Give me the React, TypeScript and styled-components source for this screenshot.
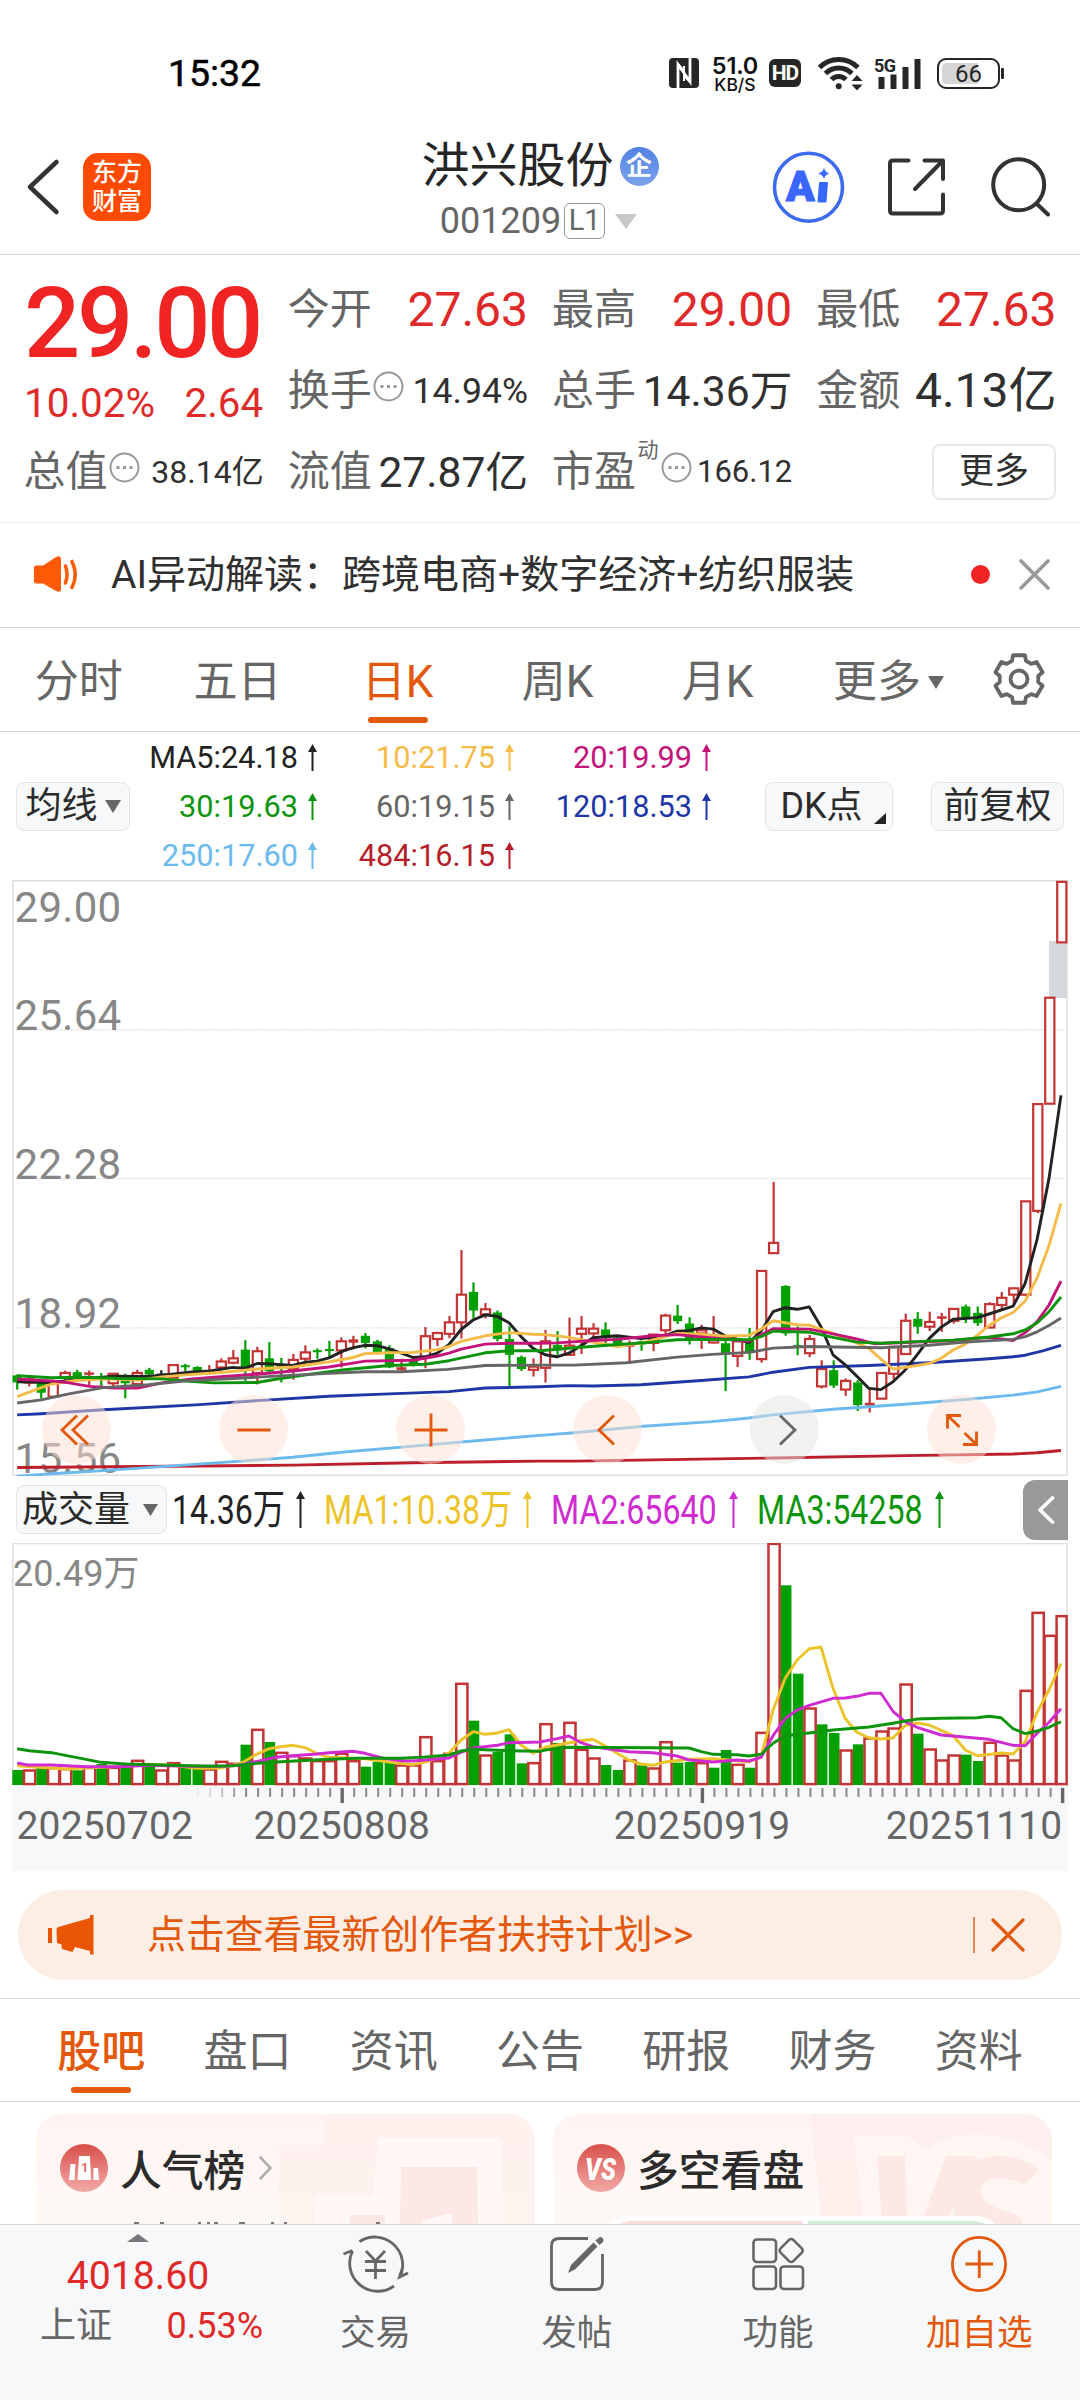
import React from "react";
import styled, { createGlobalStyle } from "styled-components";

const RED = "#e02a2a";
const ORANGE = "#e4580c";
const GREY = "#666666";
const DARK = "#2b2b2b";

const Global = createGlobalStyle`
  * { box-sizing: border-box; }
  body {
    margin: 0;
    background: #fff;
    font-family: Roboto, "Noto Sans CJK SC", sans-serif;
    color: ${DARK};
  }
  svg { display: block; flex: none; }
`;

const Page = styled.main`
  width: 1080px;
  height: 2400px;
  overflow: hidden;
  display: flex;
  flex-direction: column;
  background: #fff;
`;

/* ---------- status bar ---------- */

const StatusBar = styled.header`
  height: 120px;
  flex: none;
  padding: 26px 75px 0 168px;
  display: flex;
  align-items: center;
  justify-content: space-between;
`;
const Clock = styled.span`
  font-size: 37.4px;
  font-weight: 400;
  line-height: 40px;
  color: #000;
  -webkit-text-stroke: 0.5px #000;
`;
const StatusIcons = styled.div`
  display: flex;
  align-items: center;
  height: 40px;
`;
const NetSpeed = styled.div`
  width: 48px;
  margin: 0 10px 0 12px;
  padding-top: 3px;
  display: flex;
  flex-direction: column;
  align-items: center;
  font-family: Inter, Roboto, sans-serif;
  font-weight: 600;
  color: #111;
`;
const SpeedValue = styled.span`
  font-size: 23.5px;
  line-height: 19px;
  letter-spacing: -0.2px;
`;
const SpeedUnit = styled.span`
  font-size: 17.5px;
  line-height: 19px;
  font-weight: 500;
`;
const HdBadge = styled.span`
  width: 32px;
  height: 28px;
  border-radius: 6px;
  background: #262626;
  color: #fff;
  font-size: 21px;
  font-weight: 700;
  line-height: 29px;
  text-align: center;
  letter-spacing: -1px;
  margin-right: 16px;
`;

/* ---------- title bar ---------- */

const TitleBar = styled.div`
  height: 135px;
  flex: none;
  border-bottom: 1px solid #d6d6d6;
  display: grid;
  grid-template-columns: 1fr auto 1fr;
  align-items: center;
`;
const TitleLeft = styled.div`
  display: flex;
  align-items: center;
  gap: 23px;
  padding-left: 26px;
`;
const BrandLogo = styled.div`
  width: 68px;
  height: 68px;
  padding-top: 1px;
  border-radius: 15px;
  background: #ff4a00;
  color: #fff;
  display: flex;
  flex-direction: column;
  align-items: center;
  justify-content: center;
  font-size: 25px;
  font-weight: 500;
  line-height: 28.5px;
`;
const TitleCenter = styled.div`
  display: flex;
  flex-direction: column;
  align-items: center;
  padding: 6px 2px 0 0;
`;
const NameRow = styled.div`
  display: flex;
  align-items: center;
  gap: 6px;
  height: 62px;
  margin-left: 2px;
`;
const StockName = styled.h1`
  margin: 0;
  font-size: 48px;
  font-weight: 400;
  line-height: 62px;
  color: #262626;
`;
const CompanyBadge = styled.span`
  width: 39px;
  height: 39px;
  border-radius: 50%;
  background: linear-gradient(#5282e4, #7ba3ec);
  color: #fff;
  font-size: 26px;
  font-weight: 700;
  line-height: 39px;
  text-align: center;
`;
const CodeRow = styled.div`
  display: flex;
  align-items: center;
  height: 48px;
  padding-right: 1px;
  font-size: 36px;
  line-height: 48px;
  color: ${GREY};
`;
const LevelTag = styled.span`
  width: 41px;
  height: 36px;
  margin: 0 10px 0 3px;
  border: 1.5px solid #999;
  border-radius: 6px;
  font-size: 29px;
  line-height: 33px;
  text-align: center;
`;
const TitleRight = styled.div`
  display: flex;
  align-items: center;
  justify-content: flex-end;
  padding-right: 29px;
`;

/* ---------- quote ---------- */

const Quote = styled.section`
  height: 268px;
  flex: none;
  padding: 14px 24px 9px 24px;
  border-bottom: 1px solid #ebebeb;
  display: grid;
  grid-template-columns: repeat(4, 1fr);
  grid-template-rows: repeat(3, 81px);
  column-gap: 25px;
`;
const PriceCell = styled.div`
  grid-row: span 2;
  display: flex;
  flex-direction: column;
  color: ${RED};
`;
const Price = styled.div`
  padding-top: 1px;
  font-size: 99px;
  font-weight: 500;
  line-height: 106px;
  letter-spacing: -3.3px;
  color: #f12424;
`;
const Change = styled.div`
  display: flex;
  justify-content: space-between;
  font-size: 40.4px;
  line-height: 55px;
`;
const Cell = styled.div`
  display: flex;
  align-items: center;
  white-space: nowrap;
`;
const CellLabel = styled.span`
  font-size: 42px;
  line-height: 60px;
  margin: 0 1.5px 0 -0.5px;
  color: ${GREY};
`;
const CellValue = styled.span<{ $size: number; $up?: boolean }>`
  margin: 0 -0.5px 0 auto;
  font-size: ${(p) => p.$size}px;
  line-height: 60px;
  color: ${(p) => (p.$up ? RED : "#303030")};
`;
const Sup = styled.sup`
  align-self: flex-start;
  font-size: 21px;
  line-height: 24px;
  margin: 7px 2px 0 0;
  color: ${GREY};
`;
const MoreButton = styled.button`
  margin-left: auto;
  width: 124px;
  height: 56px;
  padding: 0;
  border: 2px solid #e8e8e8;
  border-radius: 8px;
  background: #fff;
  font: 35px/49px Roboto, "Noto Sans CJK SC", sans-serif;
  color: #303030;
`;

/* ---------- news strip ---------- */

const News = styled.section`
  height: 105px;
  flex: none;
  border-bottom: 1px solid #d9d9d9;
  display: flex;
  align-items: center;
  padding: 0 30px 1px 33px;
`;
const NewsText = styled.span`
  margin-left: 32px;
  font-size: 39px;
  line-height: 60px;
  color: #303030;
  flex: 1;
`;
const Dot = styled.i`
  width: 19px;
  height: 19px;
  border-radius: 50%;
  background: #f12424;
  margin-right: 29px;
`;

/* ---------- tabs ---------- */

const PeriodTabs = styled.nav`
  height: 104px;
  flex: none;
  border-bottom: 1px solid #d9d9d9;
  padding-top: 1px;
  display: grid;
  grid-template-columns: 157.5px repeat(5, 160px) 1fr;
`;
const SectionTabs = styled.nav`
  height: 104px;
  flex: none;
  border-top: 1px solid #d9d9d9;
  border-bottom: 1px solid #d9d9d9;
  padding: 0 28px;
  display: grid;
  grid-template-columns: repeat(7, 1fr);
`;
const Tab = styled.a<{ $active?: boolean; $bold?: boolean }>`
  display: flex;
  align-items: center;
  justify-content: center;
  position: relative;
  padding-top: 4px;
  font-size: 44px;
  line-height: 60px;
  font-weight: ${(p) => (p.$bold ? 500 : 400)};
  color: ${(p) => (p.$active ? ORANGE : GREY)};
  &::after {
    content: "";
    display: ${(p) => (p.$active ? "block" : "none")};
    position: absolute;
    bottom: 8px;
    left: 50%;
    width: 60px;
    height: 6px;
    margin-left: -30px;
    border-radius: 3px;
    background: ${ORANGE};
  }
`;
const TabCaret = styled.svg`
  margin: 0 -22px 0 7px;
`;
const GearSlot = styled.div`
  display: flex;
  align-items: center;
  padding: 0 0 3px 34px;
`;

/* ---------- moving averages ---------- */

const AverageBar = styled.section`
  height: 148px;
  flex: none;
  padding: 0 16px;
  display: flex;
  align-items: center;
`;
const Chip = styled.button<{ $w: number; $tail?: number; $gap?: number }>`
  position: relative;
  flex: none;
  width: ${(p) => p.$w}px;
  height: 49px;
  padding: 0 ${(p) => p.$tail ?? 0}px 0 0;
  border: 1.5px solid #e2e4e8;
  border-radius: 8px;
  background: #f7f8fa;
  display: flex;
  align-items: center;
  justify-content: center;
  gap: ${(p) => p.$gap ?? 0}px;
  font: 36px/46px Roboto, "Noto Sans CJK SC", sans-serif;
  color: ${DARK};
`;
const CornerMark = styled.svg`
  position: absolute;
  right: 6px;
  bottom: 6px;
`;
const Averages = styled.div`
  display: grid;
  grid-template-columns: 187px 197px 197px;
  grid-auto-rows: 49px;
  margin-right: 54px;
`;
const Average = styled.span<{ $c: string }>`
  display: flex;
  align-items: center;
  justify-content: flex-end;
  gap: 10px;
  font-size: 30.7px;
  line-height: 49px;
  color: ${(p) => p.$c};
`;
const ChipGap = styled.i`
  flex: 1;
`;

/* ---------- charts ---------- */

const Plot = styled.section<{ $h: number }>`
  position: relative;
  height: ${(p) => p.$h}px;
  flex: none;
  margin: 0 12px;
`;
const Controls = styled.div`
  position: absolute;
  left: 30px;
  top: 515px;
  display: flex;
  gap: 108px;
`;
const RoundButton = styled.button<{ $grey?: boolean }>`
  width: 69px;
  height: 69px;
  padding: 0;
  border: 0;
  border-radius: 50%;
  display: grid;
  place-items: center;
  background: ${(p) => (p.$grey ? "rgba(228,228,228,.5)" : "rgba(255,224,209,.5)")};
`;
const VolumeBar = styled.section`
  height: 67px;
  flex: none;
  padding: 0 12px 0 16px;
  display: flex;
  align-items: center;
`;
const VolumeItem = styled.span<{ $c: string; $w: number }>`
  width: ${(p) => p.$w}px;
  display: flex;
  align-items: center;
  justify-content: space-between;
  color: ${(p) => p.$c};
  margin-right: 19px;
`;
const Narrow = styled.span`
  width: 0;
  white-space: nowrap;
  font-size: 41px;
  line-height: 60px;
  transform: scaleX(0.785);
  transform-origin: left center;
`;
const Collapse = styled.button`
  width: 45px;
  height: 60px;
  margin-left: auto;
  padding: 0;
  border: 0;
  border-radius: 12px 0 0 12px;
  background: #999;
  display: grid;
  place-items: center;
`;

/* ---------- promo banner ---------- */

const Promo = styled.section`
  height: 90px;
  flex: none;
  margin: 19px 18px 18px;
  padding: 0 37px 0 30px;
  border-radius: 45px;
  background: #fceee5;
  display: flex;
  align-items: center;
  color: ${ORANGE};
`;
const PromoText = styled.span`
  flex: 1;
  margin-left: 53px;
  font-size: 38.9px;
  line-height: 60px;
`;
const Divider = styled.i`
  width: 2px;
  height: 36px;
  background: #e08a5c;
  margin-right: 16px;
`;

/* ---------- cards ---------- */

const Cards = styled.section`
  height: 122px;
  flex: none;
  overflow: hidden;
  padding: 12px 28px 0 36px;
  display: grid;
  grid-template-columns: 499px 499px;
  column-gap: 18px;
`;
const Card = styled.article`
  position: relative;
  height: 150px;
  border-radius: 26px;
  overflow: hidden;
  background: linear-gradient(#fff4f2, #fff9f6 60%);
`;
const CardArt = styled.svg`
  position: absolute;
  inset: 0;
`;
const CardHead = styled.div`
  position: relative;
  display: flex;
  align-items: center;
  height: 48px;
  margin: 30px 0 0 24px;
`;
const CardTitle = styled.h2`
  margin: 7px 14px 0 12px;
  font-size: 41.8px;
  font-weight: 500;
  line-height: 60px;
  color: ${DARK};
`;

/* ---------- bottom bar ---------- */

const BottomBar = styled.footer`
  height: 176px;
  flex: none;
  border-top: 1px solid #d5d7da;
  background: #f7f8fa;
  display: grid;
  grid-template-columns: 275px repeat(4, 1fr);
`;
const IndexBox = styled.div`
  display: flex;
  flex-direction: column;
  align-items: center;
  padding-top: 9px;
  color: ${RED};
`;
const IndexValue = styled.span`
  margin: 11px 0 0 1px;
  font-size: 39.2px;
  line-height: 46px;
`;
const IndexRow = styled.span`
  display: flex;
  justify-content: space-between;
  width: 223px;
  margin: 2px 0 0 28px;
  font-size: 36px;
  line-height: 50px;
`;
const IndexName = styled.span`
  font-size: 36px;
  color: ${GREY};
`;
const Action = styled.a<{ $accent?: boolean }>`
  display: flex;
  flex-direction: column;
  align-items: center;
  padding-top: 9px;
  color: ${(p) => (p.$accent ? ORANGE : GREY)};
`;
const ActionLabel = styled.span`
  margin-top: 13.5px;
  font-size: 35.5px;
  line-height: 50px;
`;

/* ---------- data ---------- */

const FIRST_X = 17.2;
const STEP = 12.007;
const cx = (i: number) => FIRST_X + STEP * i;
const px = (v: number) => v / 2.904;
const priceY = (v: number) => 870 + v / 2.529;
const volumeY = (v: number) => 1470 + v / 3;

type Candle = ["r" | "g" | "k", number, number, number, number];
/* direction, high, body top, body bottom, low */
const candles: Candle[] = [
  ["g", 1276, 1278, 1296, 1314], ["r", 1280, 1288, 1296, 1306], ["g", 1290, 1296, 1322, 1337], ["r", 1298, 1298, 1332, 1332],
  ["r", 1266, 1272, 1284, 1290], ["g", 1264, 1270, 1282, 1284], ["r", 1266, 1274, 1274, 1306], ["g", 1272, 1280, 1286, 1306],
  ["r", 1274, 1274, 1298, 1308], ["g", 1274, 1278, 1298, 1336], ["r", 1264, 1272, 1300, 1312], ["g", 1259, 1264, 1276, 1283],
  ["k", 1265, 1276, 1276, 1290], ["r", 1252, 1252, 1284, 1284], ["g", 1249, 1255, 1255, 1268], ["g", 1255, 1257, 1270, 1272],
  ["r", 1252, 1266, 1272, 1276], ["r", 1235, 1243, 1258, 1262], ["r", 1214, 1235, 1246, 1250], ["g", 1189, 1213, 1264, 1292],
  ["r", 1206, 1217, 1272, 1301], ["g", 1194, 1235, 1268, 1270], ["g", 1234, 1252, 1258, 1296], ["r", 1224, 1239, 1262, 1289],
  ["r", 1202, 1220, 1236, 1246], ["g", 1210, 1217, 1217, 1236], ["g", 1191, 1214, 1214, 1236], ["r", 1182, 1192, 1215, 1258],
  ["r", 1178, 1188, 1195, 1212], ["g", 1171, 1178, 1196, 1210], ["g", 1188, 1192, 1220, 1225], ["g", 1202, 1209, 1258, 1260],
  ["r", 1236, 1258, 1264, 1266], ["g", 1230, 1236, 1254, 1256], ["r", 1156, 1179, 1232, 1260], ["r", 1168, 1171, 1186, 1204],
  ["r", 1128, 1144, 1173, 1184], ["r", 961, 1074, 1144, 1185], ["g", 1043, 1067, 1114, 1134], ["r", 1095, 1111, 1124, 1134],
  ["g", 1114, 1119, 1186, 1192], ["g", 1154, 1186, 1226, 1308], ["g", 1228, 1232, 1262, 1267], ["r", 1235, 1256, 1264, 1281],
  ["r", 1163, 1192, 1259, 1296], ["g", 1166, 1201, 1215, 1226], ["r", 1132, 1203, 1226, 1228], ["r", 1128, 1160, 1173, 1224],
  ["r", 1146, 1160, 1172, 1182], ["g", 1144, 1162, 1182, 1200], ["g", 1180, 1182, 1202, 1204], ["r", 1190, 1203, 1203, 1248],
  ["g", 1190, 1192, 1200, 1216], ["r", 1175, 1175, 1196, 1217], ["r", 1122, 1127, 1164, 1176], ["g", 1100, 1127, 1141, 1148],
  ["g", 1131, 1147, 1190, 1200], ["r", 1150, 1164, 1172, 1211], ["r", 1128, 1186, 1195, 1197], ["g", 1190, 1197, 1224, 1318],
  ["r", 1188, 1192, 1229, 1257], ["g", 1158, 1190, 1222, 1239], ["r", 1014, 1014, 1237, 1246], ["r", 789, 943, 969, 969],
  ["g", 1050, 1052, 1172, 1178], ["g", 1154, 1204, 1204, 1227], ["r", 1176, 1186, 1222, 1232], ["r", 1240, 1262, 1306, 1311],
  ["g", 1240, 1265, 1304, 1310], ["r", 1286, 1292, 1314, 1330], ["g", 1290, 1296, 1353, 1368], ["r", 1314, 1348, 1354, 1372],
  ["r", 1272, 1272, 1337, 1337], ["r", 1206, 1206, 1274, 1288], ["r", 1122, 1140, 1224, 1224], ["g", 1118, 1135, 1155, 1173],
  ["r", 1117, 1143, 1155, 1166], ["r", 1120, 1132, 1132, 1168], ["r", 1110, 1110, 1140, 1147], ["g", 1099, 1104, 1132, 1146],
  ["g", 1104, 1120, 1146, 1153], ["r", 1093, 1098, 1157, 1157], ["r", 1067, 1082, 1100, 1112], ["r", 1056, 1058, 1074, 1100],
  ["r", 838, 838, 1074, 1078], ["r", 592, 592, 862, 868], ["r", 323, 323, 591, 591], ["r", 30, 30, 183, 183],
];

const volumes =
  "g900 r900 g892 r893 r896 g901 r892 g882 r892 g892 r871 g888 r900 r878 g893 g897 r897 r874 r880 g824 r778 g816 r847 r857 r864 r872 r872 r850 r872 g890 g875 g877 r885 r885 r800 r872 r850 r640 g752 r855 g846 g793 g880 r878 r761 g819 r757 r838 r864 g885 g900 r870 g886 r894 r815 g878 g876 r878 g893 g840 r883 g893 r787 r220 g346 g611 r714 g763 g789 r840 g823 r804 r783 r774 r642 g791 r837 r870 r855 g854 g873 r817 r855 r870 r661 r427 r496 r437"
    .split(" ")
    .map((s) => ({ up: s[0] === "r", top: Number(s.slice(1)) }));

/* each line comes as the two halves of the window */
type Line = { color: string; a: string; b: string };
const priceLines: Line[] = [
  {
    color: "#bb1f2b",
    a: "50,1511 500,1508 850,1505 1200,1499 1568,1495",
    b: "100,1495 677,1487 1060,1481 1374,1477 1444,1474 1513,1468",
  },
  {
    color: "#6cbaee",
    a: "50,1533 150,1527 300,1519 500,1507 700,1495 850,1485 1000,1472 1200,1457 1400,1442 1568,1430",
    b: "100,1423 300,1407 500,1395 607,1386 677,1378 851,1364 1060,1351 1235,1339 1374,1328 1444,1320 1513,1306",
  },
  {
    color: "#1f37a6",
    a: "50,1378 120,1375 300,1365 580,1352 747,1342 955,1331 1130,1325 1304,1319 1409,1310 1568,1307",
    b: "84,1304 154,1305 293,1302 468,1291 607,1282 677,1270 782,1258 955,1253 1130,1246 1304,1236 1374,1231 1409,1227 1460,1216 1513,1202",
  },
  {
    color: "#222222",
    a: "50,1294 150,1296 260,1286 330,1280 430,1281 500,1275 550,1270 610,1267 675,1258 712,1260 747,1248 785,1249 850,1253 886,1245 920,1242 955,1234 1000,1215 1030,1207 1060,1202 1095,1203 1130,1211 1165,1222 1200,1233 1235,1231 1270,1222 1304,1200 1339,1162 1374,1138 1409,1125 1444,1129 1478,1145 1513,1180 1548,1210",
    b: "15,1226 49,1231 84,1222 119,1203 154,1183 224,1178 293,1185 363,1178 398,1166 433,1165 468,1158 503,1161 537,1178 607,1195 642,1166 677,1117 712,1107 747,1111 782,1105 816,1155 851,1226 886,1251 920,1280 955,1311 990,1314 1025,1294 1060,1265 1095,1226 1130,1185 1165,1156 1200,1136 1270,1132 1304,1123 1374,1103 1409,1045 1444,933 1478,780 1513,570",
  },
  {
    color: "#f4bb48",
    a: "50,1332 120,1309 150,1300 220,1291 300,1287 400,1290 470,1282 540,1277 650,1270 747,1262 850,1257 955,1244 1025,1233 1060,1223 1130,1221 1200,1220 1270,1213 1304,1205 1339,1192 1409,1178 1478,1170 1548,1174",
    b: "15,1175 84,1182 154,1194 224,1205 293,1197 363,1180 398,1172 468,1174 537,1179 607,1177 642,1161 677,1140 747,1150 782,1151 851,1172 920,1196 955,1210 990,1237 1025,1262 1060,1258 1130,1248 1165,1235 1200,1214 1235,1199 1270,1177 1304,1152 1339,1133 1374,1119 1409,1090 1444,1031 1478,950 1513,843",
  },
  {
    color: "#c4147c",
    a: "50,1288 150,1292 200,1297 260,1306 330,1310 400,1310 470,1297 550,1288 650,1281 747,1275 850,1267 955,1257 1025,1247 1060,1242 1200,1240 1270,1229 1304,1222 1339,1212 1409,1199 1478,1197 1568,1197",
    b: "49,1196 154,1190 224,1187 328,1178 398,1175 468,1181 607,1192 677,1160 782,1161 851,1173 920,1186 970,1198 1060,1195 1200,1190 1304,1182 1374,1190 1409,1170 1444,1142 1478,1100 1513,1040",
  },
  {
    color: "#0d940d",
    a: "50,1279 150,1284 250,1283 350,1286 470,1287 550,1293 620,1297 747,1296 800,1288 900,1275 1000,1264 1130,1253 1235,1250 1304,1241 1409,1221 1478,1216 1568,1216",
    b: "100,1208 224,1200 300,1196 398,1188 468,1187 607,1188 642,1180 677,1166 782,1169 851,1182 920,1194 990,1197 1060,1194 1200,1189 1304,1181 1374,1173 1409,1163 1444,1145 1478,1117 1513,1080",
  },
  {
    color: "#666666",
    a: "50,1348 120,1340 200,1325 300,1309 430,1302 540,1292 680,1286 800,1280 955,1273 1060,1269 1165,1269 1300,1263 1409,1253 1568,1252",
    b: "100,1252 250,1246 398,1232 500,1225 607,1220 677,1209 782,1205 990,1208 1130,1202 1235,1194 1374,1187 1409,1180 1444,1168 1478,1152 1513,1133",
  },
];
const volumeLines: Line[] = [
  {
    color: "#edc32a",
    a: "50,887 100,891 190,897 260,893 330,890 430,883 500,886 570,895 640,894 700,880 747,852 782,836 816,830 851,826 886,833 920,850 955,862 1060,866 1130,876 1200,884 1235,876 1270,864 1304,850 1339,810 1374,785 1409,793 1444,789 1478,779 1513,825 1548,850",
    b: "15,832 119,812 154,808 189,828 224,850 258,870 293,882 328,886 363,876 433,868 503,866 572,872 607,876 642,860 677,720 712,625 747,570 782,536 816,531 851,655 886,745 920,787 955,803 990,807 1025,804 1060,767 1095,759 1130,765 1200,797 1235,840 1270,857 1339,849 1374,852 1409,815 1444,727 1478,660 1513,580",
  },
  {
    color: "#cf2bd1",
    a: "50,879 80,885 150,885 250,890 350,890 430,886 550,889 650,889 700,885 747,874 800,862 850,857 920,852 955,848 1025,844 1060,850 1110,864 1165,872 1200,873 1304,864 1339,847 1374,834 1444,826 1478,818 1568,816",
    b: "49,806 84,798 119,818 154,830 258,845 328,848 398,858 433,870 503,876 572,870 607,873 642,862 677,797 712,746 747,720 782,706 851,685 886,684 920,679 955,670 990,670 1025,724 1060,755 1095,772 1165,795 1304,808 1374,826 1409,827 1444,790 1478,757 1513,716",
  },
  {
    color: "#0d940d",
    a: "50,836 85,842 150,848 190,856 250,868 293,877 365,882 500,886 607,889 677,887 747,880 816,875 955,868 1040,865 1165,865 1235,861 1304,855 1339,843 1374,838 1478,842 1568,844",
    b: "15,840 84,832 433,834 468,845 503,853 572,854 607,858 642,853 677,820 712,797 782,789 851,780 955,771 1025,760 1095,747 1165,745 1270,743 1304,739 1339,743 1374,776 1409,791 1444,783 1478,772 1513,755",
  },
];
const toPoints = (l: Line, y: (v: number) => number) => {
  const part = (s: string, dx: number) =>
    s.split(" ").map((p) => {
      const [a, b] = p.split(",").map(Number);
      return `${(px(a) + dx).toFixed(1)},${y(b).toFixed(1)}`;
    });
  return [...part(l.a, 0), ...part(l.b, 540)].join(" ");
};

const averages: [string, string][] = [
  ["MA5:24.18", "#222222"], ["10:21.75", "#f4bb48"], ["20:19.99", "#c4147c"],
  ["30:19.63", "#0d940d"], ["60:19.15", "#666666"], ["120:18.53", "#1f37a6"],
  ["250:17.60", "#6cbaee"], ["484:16.15", "#b51f2a"],
];

/* ---------- small drawings ---------- */

const UpArrow = ({ h = 27 }: { h?: number }) => (
  <svg width="9" height={h} viewBox={`0 0 9 ${h}`}>
    <path d={`M4.5 4V${h}`} stroke="currentColor" strokeWidth="2" />
    <path d="M4.5 0L9 8H0Z" fill="currentColor" />
  </svg>
);
const Caret = ({ w, h, c = GREY }: { w: number; h: number; c?: string }) => (
  <svg width={w} height={h}>
    <path d={`M0 0H${w}L${w / 2} ${h}Z`} fill={c} />
  </svg>
);
const Cross = ({ s, c, w }: { s: number; c: string; w: number }) => (
  <svg width={s} height={s} fill="none" stroke={c} strokeWidth={w} strokeLinecap="round">
    <path d={`M2 2L${s - 2} ${s - 2}M${s - 2} 2L2 ${s - 2}`} />
  </svg>
);
const Info = () => (
  <svg width="31" height="31" transform="translate(0 -4)">
    <circle cx="15.5" cy="15.5" r="14" fill="none" stroke="#999" strokeWidth="2" />
    <path d="M7.5 15.5h3M14 15.5h3M20.500 15.500h3" stroke="#999" strokeWidth="3" />
  </svg>
);
const polar = (deg: number, r: number) => {
  const t = (deg * Math.PI) / 180;
  return `${(27 + r * Math.cos(t)).toFixed(2)} ${(27 + r * Math.sin(t)).toFixed(2)}`;
};
const Gear = () => {
  const pts: string[] = [];
  for (let k = 0; k < 6; k++) {
    const a = -90 + 60 * k;
    pts.push(polar(a - 21, 19.5), polar(a - 14, 24.5), polar(a + 14, 24.5), polar(a + 21, 19.5));
  }
  return (
    <svg width="54" height="54" fill="none" stroke={GREY} strokeWidth="3.8" strokeLinejoin="round">
      <path d={`M${pts.join("L")}Z`} />
      <circle cx="27" cy="27" r="8.5" />
    </svg>
  );
};

const Nfc = () => (
  <svg width="30" height="30">
    <rect width="30" height="30" rx="4" fill="#262626" />
    <path d="M9 30V6.500L21 23.500V0" fill="none" stroke="#fff" strokeWidth="2.800" />
    <path d="M9 6L15 13V8M21 24L15 18V23" fill="none" stroke="#fff" strokeWidth="2" />
  </svg>
);
const Wifi = () => (
  <svg width="46" height="34" viewBox="816 54 46 34" fill="none" stroke="#262626" strokeWidth="5">
    <path d="M818.500 65.500A27 27 0 0 1 856.900 65.500M824.500 71.500A18.500 18.500 0 0 1 850.900 71.500M830.500 77.500A10 10 0 0 1 844.900 77.500" />
    <circle cx="837.700" cy="84.300" r="3" fill="#262626" stroke="none" />
    <path d="M856 73l5.500 6h-11zM856 88.500l5.500-6h-11z" fill="#262626" stroke="none" />
  </svg>
);
const Signal = () => (
  <svg width="48" height="34" viewBox="874 54 48 34" fill="#262626">
    <rect x="878.500" y="75" width="6" height="12" />
    <rect x="890.500" y="72.500" width="6" height="14.500" />
    <rect x="902.500" y="65" width="6" height="22" />
    <rect x="914.500" y="57" width="6" height="30" />
    <text x="874" y="69.500" fontSize="18" fontWeight="700" textLength="22">5G</text>
  </svg>
);
const Battery = () => (
  <svg width="68" height="31" viewBox="937 57 68 31">
    <rect x="938" y="58" width="61" height="29" rx="8" fill="#fff" stroke="#262626" strokeWidth="2" />
    <path d="M947 62H978V83H947Q942 83 942 78V67Q942 62 947 62Z" fill="#d6d6d6" />
    <rect x="1001" y="67" width="3" height="11" rx="1" fill="#262626" />
    <text x="968.500" y="81" fontSize="24" textAnchor="middle" fill="#262626">66</text>
  </svg>
);

const Candles = () => (
  <g>
    {candles.map(([d, hi, top, bot, lo], i) => {
      const x = cx(i);
      const c = d === "g" ? "#00a000" : d === "r" ? "#c43434" : "#222";
      const h = Math.max(priceY(bot) - priceY(top), 0);
      const solid = d === "g" || h < 3;
      return (
        <g key={i}>
          <path d={`M${x} ${priceY(hi)}V${priceY(lo)}`} stroke={c} strokeWidth="2.2" />
          <rect
            x={x - 4.6}
            y={priceY(top) - (h < 1 ? 1 : 0)}
            width="9.2"
            height={Math.max(h, 2)}
            fill={solid ? c : "#fff"}
            stroke={d === "r" ? c : "none"}
            strokeWidth={solid ? 0.5 : 2.2}
          />
        </g>
      );
    })}
  </g>
);
const PriceChart = () => (
  <svg width="1056" height="596" viewBox="12 880 1056 596">
    <g stroke="#e2e2e2" strokeWidth="1.200" strokeDasharray="2 1">
      <path d="M13 1029.900H1067M13 1178.700H1067M13 1327.800H1067" />
    </g>
    <path d="M13 1476V880.800H1067V1476M13 1475.300H1067" fill="none" stroke="#dfdfdf" strokeWidth="1.600" />
    <g fontSize="42" fill="#878787" letterSpacing="0.3">
      <text x="14.500" y="922">29.00</text>
      <text x="14.500" y="1030">25.64</text>
      <text x="14.500" y="1179">22.28</text>
      <text x="14.500" y="1328">18.92</text>
      <text x="14.500" y="1472.500">15.56</text>
    </g>
    <rect x="1049" y="941" width="18" height="57" fill="#d4d7dc" />
    <Candles />
    {priceLines.map((l) => (
      <polyline key={l.color} points={toPoints(l, priceY)} fill="none" stroke={l.color} strokeWidth="2.9" strokeLinejoin="round" />
    ))}
  </svg>
);
const VolumeChart = () => (
  <svg width="1056" height="328" viewBox="12 1543 1056 328">
    <rect x="12" y="1786" width="1056" height="85" fill="#f7f8fa" />
    <path d="M12.800 1786V1543.500H1067V1786" fill="none" stroke="#dfdfdf" strokeWidth="1.600" />
    <text x="13" y="1586" fontSize="36" fill="#878787">20.49万</text>
    {volumes.map(({ up, top }, i) => {
      const x = cx(i);
      const y = volumeY(top);
      return up ? (
        <rect key={i} x={x - 5.2} y={y + 0.5} width={i === 87 ? 10 : 11.2} height={1783.6 - y} fill="#fff" stroke="#c43434" strokeWidth="2.5" />
      ) : (
        <rect key={i} x={x - 4.8} y={y} width="10.6" height={1785 - y} fill="#00a000" />
      );
    })}
    {volumeLines.map((l) => (
      <polyline key={l.color} points={toPoints(l, volumeY)} fill="none" stroke={l.color} strokeWidth="2.9" strokeLinejoin="round" />
    ))}
    {volumes.map((_, i) =>
      i < 15 ? null : (
        <path
          key={i}
          d={`M${cx(i) + 0.8} 1788V${i % 30 === 27 ? 1803 : 1797}`}
          stroke={i % 30 === 27 ? "#666" : "#8a8a8a"}
          strokeWidth={i % 30 === 27 ? 3.4 : 2}
          opacity={[0.1, 0.25, 0.5, 0.8][i - 15] ?? 1}
        />
      ),
    )}
    <g fontSize="39" fill={GREY} letterSpacing="0.15">
      <text x="16.500" y="1839">20250702</text>
      <text x="253.500" y="1839">20250808</text>
      <text x="613.800" y="1839">20250919</text>
      <text x="885.800" y="1839">20251110</text>
    </g>
  </svg>
);

const IconStroke = ({ children, w = 36, c = ORANGE }: { children: React.ReactNode; w?: number; c?: string }) => (
  <svg width={w} height="36" viewBox="0 0 36 36" fill="none" stroke={c} strokeWidth="2.800">
    {children}
  </svg>
);

export default function App() {
  return (
    <Page>
      <Global />
      <StatusBar>
        <Clock>15:32</Clock>
        <StatusIcons>
          <Nfc />
          <NetSpeed>
            <SpeedValue>51.0</SpeedValue>
            <SpeedUnit>KB/S</SpeedUnit>
          </NetSpeed>
          <HdBadge>HD</HdBadge>
          <Wifi />
          <svg width="11" height="10" />
          <Signal />
          <svg width="15" height="10" />
          <Battery />
        </StatusIcons>
      </StatusBar>

      <TitleBar>
        <TitleLeft>
          <svg width="34" height="58" fill="none" stroke="#333" strokeWidth="4.500" strokeLinecap="round" strokeLinejoin="round">
            <path d="M30.500 4L4 29L30.500 54" />
          </svg>
          <BrandLogo>
            <span>东方</span>
            <span>财富</span>
          </BrandLogo>
        </TitleLeft>
        <TitleCenter>
          <NameRow>
            <StockName>洪兴股份</StockName>
            <CompanyBadge>企</CompanyBadge>
          </NameRow>
          <CodeRow>
            001209
            <LevelTag>L1</LevelTag>
            <Caret w={22} h={15} c="#c8c8c8" />
          </CodeRow>
        </TitleCenter>
        <TitleRight>
          <svg width="73" height="73" viewBox="772 151 73 73">
            <circle cx="808.500" cy="187.300" r="34" fill="none" stroke="#3c6bf0" strokeWidth="3.600" />
            <text x="786" y="201" fontSize="42" fontWeight="900" fill="#3866ff" stroke="#3866ff" strokeWidth="1.200">A</text>
            <path d="M820 183h7l-1.500 18.500h-7z" fill="#3866ff" stroke="#3866ff" strokeWidth="2" strokeLinejoin="round" />
            <path d="M824 167.500Q825 172.500 829.500 173.500Q825 174.500 824 179Q823 174.500 818 173.500Q823 172.500 824 167.500Z" fill="#3866ff" />
          </svg>
          <svg width="58" height="58" viewBox="888 158.500 58 58" fill="none" stroke="#333" strokeWidth="4" strokeLinecap="round" strokeLinejoin="round" style={{ marginLeft: 43 }}>
            <path d="M908.500 161H893Q890 161 890 164V211Q890 214 893 214H940Q943 214 943 211V195" />
            <path d="M924.500 161H943V179.500M942 162L915 189.500" />
          </svg>
          <svg width="60" height="60" viewBox="991 156.500 60 60" fill="none" stroke="#333" strokeWidth="4" strokeLinecap="round" style={{ marginLeft: 45 }}>
            <circle cx="1018.700" cy="184.300" r="25.500" />
            <path d="M1037.500 204L1048 214" />
          </svg>
        </TitleRight>
      </TitleBar>

      <Quote>
        <PriceCell>
          <Price>29.00</Price>
          <Change>
            <span>10.02%</span>
            <span>2.64</span>
          </Change>
        </PriceCell>
        <Cell><CellLabel>今开</CellLabel><CellValue $size={48} $up>27.63</CellValue></Cell>
        <Cell><CellLabel>最高</CellLabel><CellValue $size={48} $up>29.00</CellValue></Cell>
        <Cell><CellLabel>最低</CellLabel><CellValue $size={48} $up>27.63</CellValue></Cell>
        <Cell><CellLabel>换手</CellLabel><Info /><CellValue $size={35.6}>14.94%</CellValue></Cell>
        <Cell><CellLabel>总手</CellLabel><CellValue $size={42.6}>14.36万</CellValue></Cell>
        <Cell><CellLabel>金额</CellLabel><CellValue $size={48}>4.13亿</CellValue></Cell>
        <Cell><CellLabel>总值</CellLabel><Info /><CellValue $size={32}>38.14亿</CellValue></Cell>
        <Cell><CellLabel>流值</CellLabel><CellValue $size={42.6}>27.87亿</CellValue></Cell>
        <Cell><CellLabel>市盈</CellLabel><Sup>动</Sup><Info /><CellValue $size={31}>166.12</CellValue></Cell>
        <Cell><MoreButton>更多</MoreButton></Cell>
      </Quote>

      <News>
        <svg width="46" height="38" viewBox="33 556 46 38">
          <path d="M34 567.500Q34 565.500 36 565.500H43L56 557Q61 554.500 61 560V588.500Q61 593.500 56 591L43 583.500H36Q34 583.500 34 581.500Z" fill="#ff5a05" />
          <path d="M65.500 566Q68.500 574.500 65.500 583M72 561.500Q78.500 574.500 72 587.500" fill="none" stroke="#ff5a05" strokeWidth="3.600" strokeLinecap="round" />
        </svg>
        <NewsText>AI异动解读：跨境电商+数字经济+纺织服装</NewsText>
        <Dot />
        <Cross s={31} c="#999" w={3.6} />
      </News>

      <PeriodTabs>
        <Tab>分时</Tab>
        <Tab>五日</Tab>
        <Tab $active>日K</Tab>
        <Tab>周K</Tab>
        <Tab>月K</Tab>
        <Tab>
          更多
          <TabCaret width="16" height="13"><path d="M0 0H16L8 13Z" fill={GREY} /></TabCaret>
        </Tab>
        <GearSlot><Gear /></GearSlot>
      </PeriodTabs>

      <AverageBar>
        <Chip $w={114} $gap={7}>均线<Caret w={16} h={13} /></Chip>
        <Averages>
          {averages.map(([t, c]) => (
            <Average key={t} $c={c}>{t}<UpArrow /></Average>
          ))}
        </Averages>
        <Chip $w={128} $tail={15}>
          <span>DK点</span>
          <CornerMark width="12" height="11"><path d="M12 0V11H0Z" fill="#222" /></CornerMark>
        </Chip>
        <ChipGap />
        <Chip $w={133}>前复权</Chip>
      </AverageBar>

      <Plot $h={596}>
        <PriceChart />
        <Controls>
          <RoundButton>
            <IconStroke><path d="M18 3.500L3 18L18 32.500M29 3.500L14 18L29 32.500" /></IconStroke>
          </RoundButton>
          <RoundButton><IconStroke><path d="M1.500 18H34.500" /></IconStroke></RoundButton>
          <RoundButton><IconStroke><path d="M1.500 18H34.500M18 1.500V34.500" /></IconStroke></RoundButton>
          <RoundButton><IconStroke><path d="M24 3.500L9 18L24 32.500" /></IconStroke></RoundButton>
          <RoundButton $grey><IconStroke c={GREY}><path d="M13 3.500L28 18L13 32.500" /></IconStroke></RoundButton>
          <RoundButton>
            <IconStroke>
              <path d="M3.500 16.500V3.500H17M4 4L15.500 15M32.500 19.500V32.500H19M32 32L20.500 21" />
            </IconStroke>
          </RoundButton>
        </Controls>
      </Plot>

      <VolumeBar>
        <Chip $w={151} $tail={3} $gap={13}>
          <span>成交量</span>
          <Caret w={15} h={12} />
        </Chip>
        <svg width="5" height="4" />
        <VolumeItem $c="#222" $w={133}><Narrow>14.36万</Narrow><UpArrow h={37} /></VolumeItem>
        <VolumeItem $c="#edc32a" $w={208}><Narrow>MA1:10.38万</Narrow><UpArrow h={37} /></VolumeItem>
        <VolumeItem $c="#cf2bd1" $w={187}><Narrow>MA2:65640</Narrow><UpArrow h={37} /></VolumeItem>
        <VolumeItem $c="#0d940d" $w={187}><Narrow>MA3:54258</Narrow><UpArrow h={37} /></VolumeItem>
        <Collapse>
          <svg width="18" height="28" fill="none" stroke="#fff" strokeWidth="3.800" strokeLinecap="round" strokeLinejoin="round">
            <path d="M15.500 2L3 14L15.500 26" />
          </svg>
        </Collapse>
      </VolumeBar>

      <Plot $h={328}>
        <VolumeChart />
      </Plot>

      <Promo>
        <svg width="46" height="40" viewBox="48 1915 46 40" fill="#ea5504">
          <path d="M48 1928h4v15h-4zM56.500 1929Q57 1927.500 58.500 1927L90 1918V1915H93.500V1954.500H90V1951L75 1947L72.500 1952L62 1949L61.500 1944.500L57 1943Z" />
        </svg>
        <PromoText>点击查看最新创作者扶持计划&gt;&gt;</PromoText>
        <Divider />
        <Cross s={34} c={ORANGE} w={3.2} />
      </Promo>

      <SectionTabs>
        <Tab $active $bold>股吧</Tab>
        <Tab>盘口</Tab>
        <Tab>资讯</Tab>
        <Tab>公告</Tab>
        <Tab>研报</Tab>
        <Tab>财务</Tab>
        <Tab>资料</Tab>
      </SectionTabs>

      <Cards>
        <Card>
          <CardArt width="499" height="150" viewBox="36 2114 499 150">
            <path d="M325 2114V2145H279V2264H535V2114Z" fill="#fdeeeb" opacity=".6" />
            <path d="M378 2138H501L506 2264H312L315 2196H373Z" fill="#fff8f6" />
            <path d="M401 2167H477L479 2264H399ZM350 2215H385V2264H349Z" fill="#fce9e6" />
            <path d="M421 2221L452 2213V2264H421Z" fill="#fff8f6" />
            <path d="M134 2223h5M160 2223h4M198 2223h3M207 2223h3M214 2223h4M239 2223h6M271 2223h3M284 2223h3M376 2223h4" stroke="#777" strokeWidth="2" />
          </CardArt>
          <CardHead>
            <svg width="48" height="48">
              <defs>
                <linearGradient id="badge" x2="0" y2="1"><stop stopColor="#d94f4b" /><stop offset="1" stopColor="#f2aaa6" /></linearGradient>
              </defs>
              <circle cx="24" cy="24" r="24" fill="url(#badge)" />
              <path d="M10.500 20h5l-1 16h-5.500zM19 12h11l1 24H17.500zM33.500 24h4.500l1 12h-5.500z" fill="#fff" />
              <text x="21" y="28" fontSize="13" fontWeight="700" fill="#dc6a66">1</text>
            </svg>
            <CardTitle>人气榜</CardTitle>
            <svg width="13" height="24" fill="none" stroke="#b0aeae" strokeWidth="2.600" strokeLinecap="round"><path d="M1.500 1.500L11.500 12L1.500 22.500" /></svg>
          </CardHead>
        </Card>
        <Card>
          <CardArt width="499" height="150" viewBox="553 2114 499 150">
            <path d="M810 2114H1052V2264H826Z" fill="#fdeeeb" opacity=".8" />
            <path d="M854 2136H908L926 2150Q940 2136 970 2135Q1020 2133 1052 2160V2264H868Z" fill="#fff6f4" />
            <path d="M877 2156H905L909 2264H885ZM946 2156H977L926 2264H906Z" fill="#fce9e6" />
            <path d="M1040 2170Q1010 2148 975 2160Q940 2180 958 2224H1022Q1025 2218 1010 2212Q980 2205 981 2190Q985 2170 1025 2184Z" fill="#fce9e6" />
            <rect x="600" y="2216" width="405" height="60" rx="30" fill="#fff" />
            <path d="M630 2221H802V2264H600Q600 2225 630 2221Z" fill="#fadcda" />
            <path d="M808 2221H975Q1005 2225 1005 2264H808Z" fill="#d5ecdc" />
          </CardArt>
          <CardHead>
            <svg width="48" height="48">
              <circle cx="24" cy="24" r="24" fill="url(#badge)" />
              <text x="23.500" y="35.500" fontSize="32" fontWeight="900" fontStyle="italic" fill="#fff" textAnchor="middle" textLength="31" lengthAdjust="spacingAndGlyphs">VS</text>
            </svg>
            <CardTitle>多空看盘</CardTitle>
          </CardHead>
        </Card>
      </Cards>

      <BottomBar>
        <IndexBox>
          <svg width="22" height="8"><path d="M11 0L22 8H0Z" fill="#77787b" /></svg>
          <IndexValue>4018.60</IndexValue>
          <IndexRow><IndexName>上证</IndexName>0.53%</IndexRow>
        </IndexBox>
        <Action>
          <svg width="66" height="60" viewBox="343 2234 66 60" fill="none" stroke="currentColor" strokeWidth="2.800">
            <path d="M359.500 2241.500A28 28 0 0 1 400 2277M408 2273L399.500 2277L403 2266" />
            <path d="M394 2286A28 28 0 0 1 352.500 2251M343.500 2254L352.500 2250.500" />
            <path d="M366 2251L375.500 2261L385 2251M375.500 2261V2279M365 2261.500H386M365 2270.500H386" />
          </svg>
          <ActionLabel>交易</ActionLabel>
        </Action>
        <Action>
          <svg width="56" height="60" viewBox="549 2234 56 60" fill="none" stroke="currentColor" strokeWidth="2.800">
            <path d="M588 2238.500H559Q551.500 2238.500 551.500 2246V2282Q551.500 2289.500 559 2289.500H595Q602.500 2289.500 602.500 2282V2254" />
            <path d="M568 2273L571 2265L593.500 2242.500L597.500 2246.500L575.500 2269Z" fill="currentColor" stroke="none" />
            <path d="M595.500 2240.500L599 2237.500Q601 2236.500 602.500 2238Q604.500 2240 603 2242L599.500 2245Z" fill="currentColor" stroke="none" />
          </svg>
          <ActionLabel>发帖</ActionLabel>
        </Action>
        <Action>
          <svg width="56" height="60" viewBox="750 2234 56 60" fill="none" stroke="currentColor" strokeWidth="2.600">
            <rect x="753.500" y="2239.500" width="22.500" height="22.500" rx="3.500" />
            <rect x="753.500" y="2266.500" width="22.500" height="22.500" rx="3.500" />
            <rect x="780.500" y="2266.500" width="22.500" height="22.500" rx="3.500" />
            <rect x="782.200" y="2241.500" width="18" height="18" rx="3" transform="rotate(45 791.200 2250.500)" />
          </svg>
          <ActionLabel>功能</ActionLabel>
        </Action>
        <Action $accent>
          <svg width="60" height="60" viewBox="949 2234 60 60" fill="none" stroke="currentColor" strokeWidth="2.800">
            <circle cx="979" cy="2264" r="26.600" />
            <path d="M965.500 2264H993M979.300 2250.500V2278" />
          </svg>
          <ActionLabel>加自选</ActionLabel>
        </Action>
      </BottomBar>
    </Page>
  );
}
